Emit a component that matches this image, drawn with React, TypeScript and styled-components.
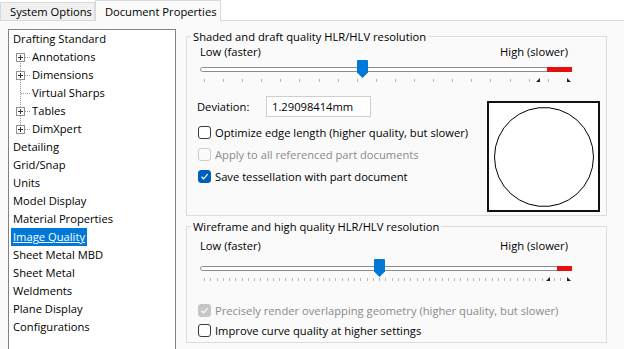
import React from "react";
import styled, { createGlobalStyle, css } from "styled-components";

const Global = createGlobalStyle`
  html, body { margin: 0; padding: 0; background: #fafafa; }
  body {
    font-family: "Open Sans", "Noto Sans", sans-serif;
    font-size: 11.2px;
    color: #000;
    width: 624px;
    height: 349px;
    overflow: hidden;
  }
`;

const Dialog = styled.div`
  display: flex;
  flex-direction: column;
  width: 624px;
  height: 349px;
  overflow: hidden;
`;

const TabStrip = styled.div`
  display: flex;
  align-items: flex-end;
  height: 20px;
  background: #ffffff;
  border-bottom: 1px solid #d9d9d9;
`;

const Tab = styled.div<{ $active?: boolean }>`
  box-sizing: border-box;
  display: flex;
  align-items: center;
  height: ${(p) => (p.$active ? 21 : 18)}px;
  margin-bottom: ${(p) => (p.$active ? -1 : 0)}px;
  padding: 0 ${(p) => (p.$active ? 3 : 2)}px 0 ${(p) => (p.$active ? 9 : 9)}px;
  background: ${(p) => (p.$active ? "#fafafa" : "#f0f0f0")};
  border: 1px solid #d9d9d9;
  border-bottom: none;
  white-space: nowrap;
`;

const Body = styled.div`
  display: flex;
  gap: 10px;
  padding: 8px 0 0 8px;
  flex: 1;
  min-height: 0;
`;

const TreePanel = styled.div`
  box-sizing: border-box;
  flex-shrink: 0;
  width: 168px;
  height: 340px;
  background: #ffffff;
  border: 1px solid #828282;
  display: flex;
  flex-direction: column;
`;

const TreeRow = styled.div`
  display: flex;
  align-items: center;
  height: 18px;
  padding-left: 2px;
`;

const TreeLabel = styled.span<{ $selected?: boolean }>`
  padding: 0 2px;
  line-height: 18px;
  white-space: nowrap;
  ${(p) =>
    p.$selected &&
    css`
      background: #0078d7;
      color: #ffffff;
      text-decoration: underline;
    `}
`;

const RightPane = styled.div`
  display: flex;
  flex-direction: column;
  gap: 3px;
  width: 421px;
  flex-shrink: 0;
`;

const Group = styled.fieldset`
  box-sizing: border-box;
  margin: 0;
  padding: 0;
  min-width: 0;
  width: 100%;
  border: 1px solid #dcdcdc;
`;

const Legend = styled.legend`
  margin-left: 4px;
  padding: 0 2px;
  line-height: 15px;
  white-space: nowrap;
`;

const GroupContent = styled.div<{ $pb: number }>`
  display: flex;
  flex-direction: column;
  padding: 0 6px ${(p) => p.$pb}px 10px;
`;

const LabelsRow = styled.div<{ $mt: number }>`
  display: flex;
  justify-content: space-between;
  width: 372px;
  box-sizing: border-box;
  margin: ${(p) => p.$mt}px 0 0 3px;
  padding-right: 4px;
  line-height: 16px;
`;

const SliderBox = styled.div<{ $mt: number }>`
  position: relative;
  display: flex;
  flex-direction: column;
  width: 372px;
  margin: ${(p) => p.$mt}px 0 0 3px;
`;

const Track = styled.div`
  position: relative;
  box-sizing: border-box;
  margin-top: 7px;
  height: 5px;
  border: 1px solid #8d8d8d;
  border-radius: 3px;
  background: #ffffff;
`;

const RedRange = styled.div`
  position: absolute;
  top: -1px;
  bottom: -1px;
  right: -1px;
  background: #e3100f;
`;

const Ticks = styled.div`
  display: flex;
  justify-content: space-between;
  margin-top: 7px;
  padding: 0 4px;
  height: 4px;
`;

const Tick = styled.div`
  width: 1px;
  height: 3px;
  background: #b8b8b8;
`;

const Thumb = styled.svg`
  position: absolute;
  top: 0;
`;

const Marker = styled.svg`
  position: absolute;
  top: 18px;
`;

const OptionsRow = styled.div`
  display: flex;
  justify-content: space-between;
  align-items: flex-start;
  margin-top: 13px;
`;

const LeftCol = styled.div`
  display: flex;
  flex-direction: column;
`;

const DeviationRow = styled.div`
  display: flex;
  align-items: center;
  height: 21px;
`;

const FieldLabel = styled.span`
  width: 69px;
`;

const TextInput = styled.div`
  box-sizing: border-box;
  width: 105px;
  height: 21px;
  display: flex;
  align-items: center;
  padding-left: 5px;
  background: #ffffff;
  border: 1px solid #cfcfcf;
`;

const CheckList = styled.div<{ $mt: number }>`
  display: flex;
  flex-direction: column;
  margin-top: ${(p) => p.$mt}px;
`;

const CheckRow = styled.div<{ $h: number; $disabled?: boolean }>`
  display: flex;
  align-items: center;
  gap: 4px;
  height: ${(p) => p.$h}px;
  margin-left: 1px;
  white-space: nowrap;
  color: ${(p) => (p.$disabled ? "#8a8a8a" : "#000000")};
`;

const Box = styled.span<{ $checked?: boolean; $disabled?: boolean }>`
  box-sizing: border-box;
  width: 13px;
  height: 13px;
  border-radius: 3px;
  display: inline-flex;
  align-items: center;
  justify-content: center;
  flex-shrink: 0;
  ${(p) =>
    p.$checked
      ? css`
          background: ${p.$disabled ? "#c6c6c6" : "#005fb8"};
          border: 1px solid ${p.$disabled ? "#c6c6c6" : "#005fb8"};
        `
      : css`
          background: ${p.$disabled ? "#fbfbfb" : "#ffffff"};
          border: 1px solid ${p.$disabled ? "#cccccc" : "#3a3a3a"};
        `}
`;

const Preview = styled.div`
  box-sizing: border-box;
  width: 113px;
  height: 111px;
  margin-top: 5px;
  border: 2px solid #111111;
  background: #ffffff;
  display: flex;
  align-items: center;
  justify-content: center;
`;

function Connector({ expandable, first, last }: { expandable?: boolean; first?: boolean; last?: boolean }) {
  const y1 = first ? 13 : 0;
  const y2 = last ? 5 : 18;
  return (
    <svg width="19" height="18" viewBox="0 0 19 18">
      <line x1="9.5" y1={y1} x2="9.5" y2={y2} stroke="#9a9a9a" strokeDasharray="1 1" />
      <line x1={expandable ? 14 : 10} y1="9.5" x2="19" y2="9.5" stroke="#9a9a9a" strokeDasharray="1 1" />
      {expandable && (
        <>
          <rect x="5.5" y="5.5" width="8" height="8" fill="#ffffff" stroke="#919191" />
          <line x1="7" y1="9.5" x2="12" y2="9.5" stroke="#333333" />
          <line x1="9.5" y1="7" x2="9.5" y2="12" stroke="#333333" />
        </>
      )}
    </svg>
  );
}

type Item = { label: string; child?: boolean; expandable?: boolean; first?: boolean; last?: boolean; selected?: boolean };

const items: Item[] = [
  { label: "Drafting Standard" },
  { label: "Annotations", child: true, expandable: true, first: true },
  { label: "Dimensions", child: true, expandable: true },
  { label: "Virtual Sharps", child: true },
  { label: "Tables", child: true, expandable: true },
  { label: "DimXpert", child: true, expandable: true, last: true },
  { label: "Detailing" },
  { label: "Grid/Snap" },
  { label: "Units" },
  { label: "Model Display" },
  { label: "Material Properties" },
  { label: "Image Quality", selected: true },
  { label: "Sheet Metal MBD" },
  { label: "Sheet Metal" },
  { label: "Weldments" },
  { label: "Plane Display" },
  { label: "Configurations" },
];

function CheckMark({ color = "#ffffff" }: { color?: string }) {
  return (
    <svg width="9" height="9" viewBox="0 0 9 9">
      <path d="M1.5 4.8 L3.6 6.8 L7.6 2.2" fill="none" stroke={color} strokeWidth="1.2" />
    </svg>
  );
}

function Check({ label, checked, disabled, h }: { label: string; checked?: boolean; disabled?: boolean; h: number }) {
  return (
    <CheckRow $h={h} $disabled={disabled}>
      <Box $checked={checked} $disabled={disabled}>{checked && <CheckMark />}</Box>
      <span>{label}</span>
    </CheckRow>
  );
}

function Slider({ thumb, ticks, red, markers, mt }: { thumb: number; ticks: number; red: number; markers: number[]; mt: number }) {
  return (
    <SliderBox $mt={mt}>
      <Track>
        <RedRange style={{ left: red }} />
      </Track>
      <Ticks>
        {Array.from({ length: ticks }).map((_, i) => (
          <Tick key={i} />
        ))}
      </Ticks>
      <Marker width="4" height="4" viewBox="0 0 4 4" style={{ left: markers[0] - 2 }}>
        <polygon points="4,0 4,4 0,4" fill="#1e1e1e" />
      </Marker>
      <Marker width="4" height="4" viewBox="0 0 4 4" style={{ left: markers[1] - 1 }}>
        <polygon points="0,0 4,4 0,4" fill="#1e1e1e" />
      </Marker>
      <Thumb width="11" height="18" viewBox="0 0 11 18" style={{ left: thumb - 5.5 }}>
        <path d="M1 0 H10 Q11 0 11 1 V12.5 L5.5 18 L0 12.5 V1 Q0 0 1 0 Z" fill="#0078d7" />
      </Thumb>
    </SliderBox>
  );
}

function Circle() {
  const n = 30;
  const pts = Array.from({ length: n })
    .map((_, i) => {
      const a = (i / n) * Math.PI * 2;
      return `${(55 + 49.5 * Math.cos(a)).toFixed(2)},${(54 + 49.5 * Math.sin(a)).toFixed(2)}`;
    })
    .join(" ");
  return (
    <svg width="109" height="107" viewBox="0 0 109 107">
      <polygon points={pts} fill="none" stroke="#000000" strokeWidth="1" />
    </svg>
  );
}

export default function App() {
  return (
    <Dialog>
      <Global />
      <TabStrip>
        <Tab>System Options</Tab>
        <Tab $active>Document Properties</Tab>
      </TabStrip>
      <Body>
        <TreePanel>
          {items.map((it) => (
            <TreeRow key={it.label}>
              {it.child && <Connector expandable={it.expandable} first={it.first} last={it.last} />}
              <TreeLabel $selected={it.selected}>{it.label}</TreeLabel>
            </TreeRow>
          ))}
        </TreePanel>
        <RightPane>
          <Group>
            <Legend>Shaded and draft quality HLR/HLV resolution</Legend>
            <GroupContent $pb={3}>
              <LabelsRow $mt={0}>
                <span>Low (faster)</span>
                <span>High (slower)</span>
              </LabelsRow>
              <Slider mt={0} thumb={162.5} ticks={20} red={346} markers={[338, 368]} />
              <OptionsRow>
                <LeftCol>
                  <DeviationRow>
                    <FieldLabel>Deviation:</FieldLabel>
                    <TextInput>1.29098414mm</TextInput>
                  </DeviationRow>
                  <CheckList $mt={4}>
                    <Check h={22} label="Optimize edge length (higher quality, but slower)" />
                    <Check h={22} disabled label="Apply to all referenced part documents" />
                    <Check h={23} checked label="Save tessellation with part document" />
                  </CheckList>
                </LeftCol>
                <Preview>
                  <Circle />
                </Preview>
              </OptionsRow>
            </GroupContent>
          </Group>
          <Group>
            <Legend>Wireframe and high quality HLR/HLV resolution</Legend>
            <GroupContent $pb={2}>
              <LabelsRow $mt={4}>
                <span>Low (faster)</span>
                <span>High (slower)</span>
              </LabelsRow>
              <Slider mt={5} thumb={179} ticks={59} red={356} markers={[348, 368]} />
              <CheckList $mt={18}>
                <Check h={20} checked disabled label="Precisely render overlapping geometry (higher quality, but slower)" />
                <Check h={20} label="Improve curve quality at higher settings" />
              </CheckList>
            </GroupContent>
          </Group>
        </RightPane>
      </Body>
    </Dialog>
  );
}
